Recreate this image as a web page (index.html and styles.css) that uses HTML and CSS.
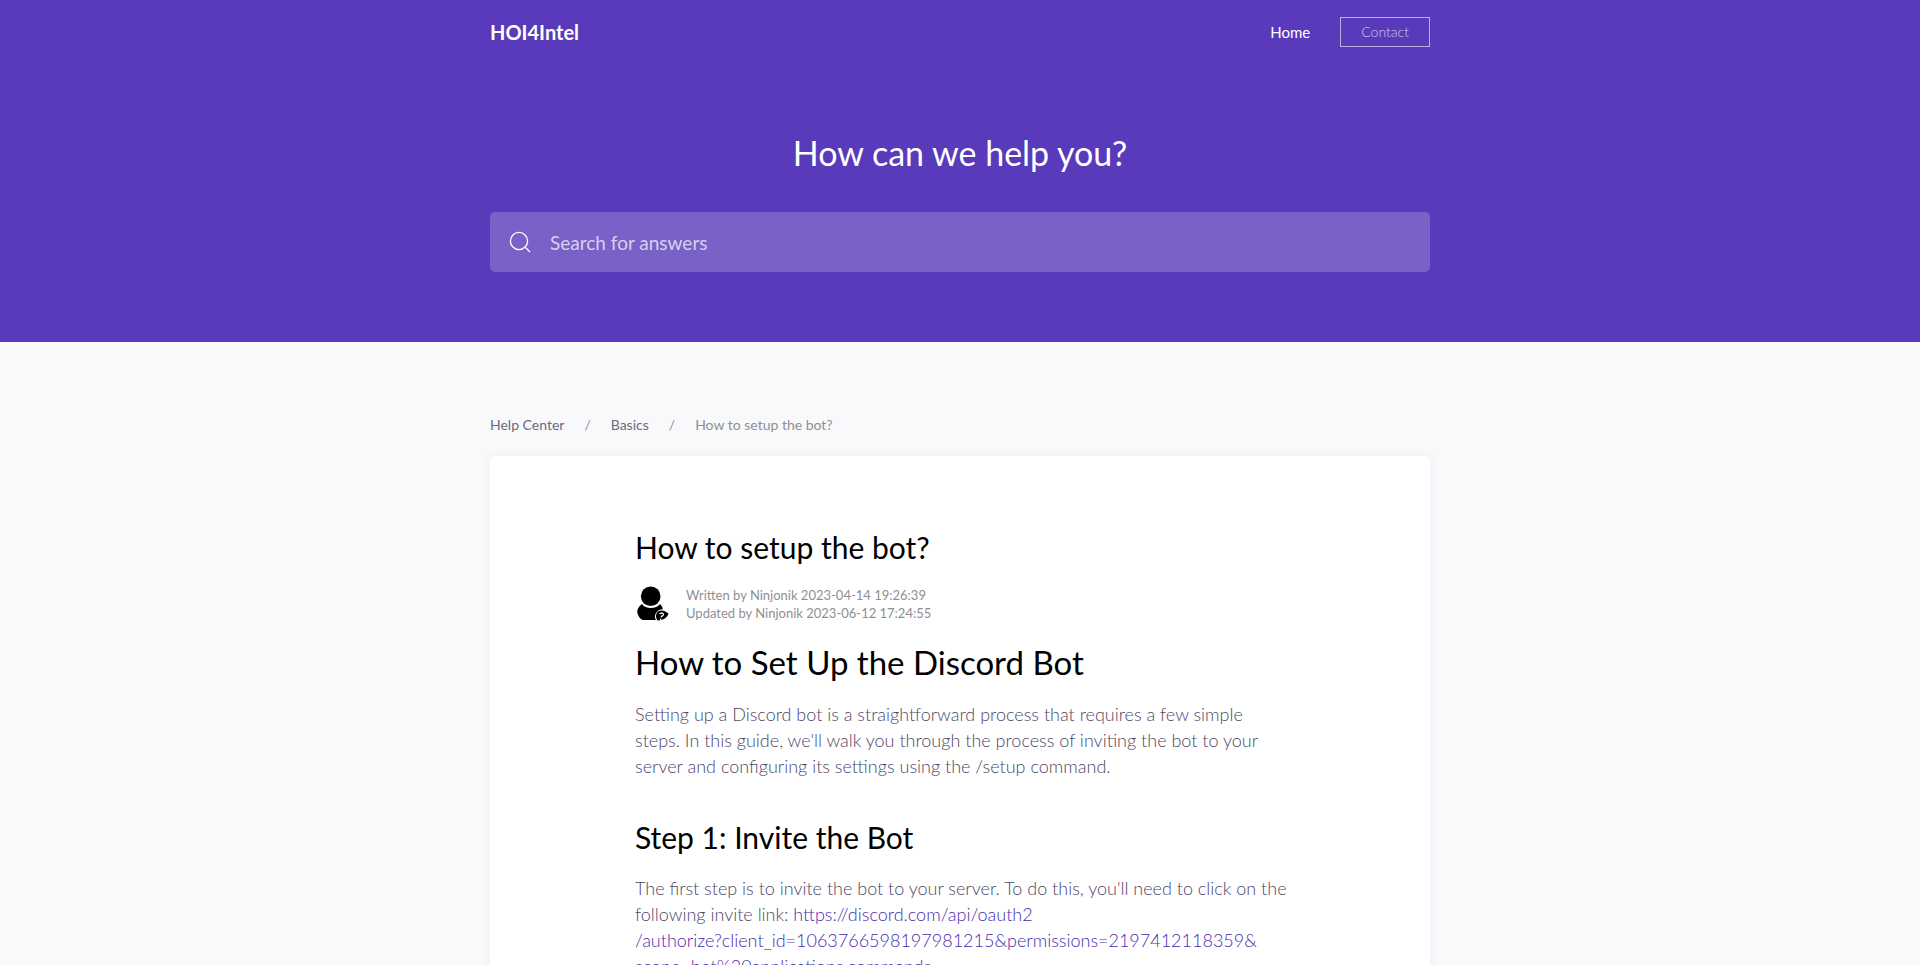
FILE: index.html
```html
<!DOCTYPE html>
<html lang="en">
<head>
<meta charset="utf-8">
<meta name="viewport" content="width=device-width, initial-scale=1">
<title>How to setup the bot? - HOI4Intel</title>
<link rel="stylesheet" href="styles.css">
</head>
<body>
<header class="hero">
  <div class="container">
    <nav class="navbar" aria-label="Main">
      <a class="brand" href="#">HOI4Intel</a>
      <div class="nav-links">
        <a class="nav-link" href="#">Home</a>
        <a class="nav-button" href="#">Contact</a>
      </div>
    </nav>
    <h1 class="hero-title">How can we help you?</h1>
    <form class="search" role="search">
      <label class="search-label" for="search" aria-label="Search">
        <svg class="search-icon" viewBox="0 0 20 20" aria-hidden="true"><circle cx="9" cy="9" r="8.6"/><path d="M15 15l5 5"/></svg>
      </label>
      <input class="search-input" id="search" type="search" placeholder="Search for answers">
    </form>
  </div>
</header>
<main class="container">
  <nav class="breadcrumb" aria-label="Breadcrumb">
    <a class="crumb" href="#">Help Center</a>
    <span>/</span>
    <a class="crumb" href="#">Basics</a>
    <span>/</span>
    <span>How to setup the bot?</span>
  </nav>
  <article class="card">
    <h2 class="article-title">How to setup the bot?</h2>
    <div class="author">
      <svg class="avatar" viewBox="0 0 35 35" aria-hidden="true">
        <circle cx="15.700" cy="10.200" r="9.800"/>
        <path d="M7 18C10 23.300 21.500 23.300 25 18C26.500 19.300 27.500 21.500 27.800 23.200C22 23.500 18 29 21 34H9C6 34 3.500 31.500 2.200 26C2.200 23 4 20 7 18Z"/>
        <path d="M22.500 34.500C19 29.500 22 24.500 26.500 24.500C29.500 24.500 31.500 26.200 33.500 27.500C32.500 31 29.500 34 22.500 34.500Z"/>
        <path class="avatar-mark" d="M24.600 28C25.200 26.700 28.700 26.600 28.500 28.700C28.300 30 26.400 29.700 26.100 31.300M25.600 32.800V34"/>
      </svg>
      <div class="meta">
        <div>Written by Ninjonik 2023-04-14 19:26:39</div>
        <div>Updated by Ninjonik 2023-06-12 17:24:55</div>
      </div>
    </div>
    <h1 class="content-title">How to Set Up the Discord Bot</h1>
    <p class="text">Setting up a Discord bot is a straightforward process that requires a few simple steps. In this guide, we'll walk you through the process of inviting the bot to your server and configuring its settings using the /setup command.</p>
    <h2 class="step-title">Step 1: Invite the Bot</h2>
    <p class="text">The first step is to invite the bot to your server. To do this, you'll need to click on the following invite link: <a class="link" href="#"><span class="url-part">https://discord.com/api/oauth2</span><span class="url-part">/authorize?client_id=1063766598197981215&amp;permissions=2197412118359&amp;</span><span class="url-part">scope=bot%20applications.commands</span></a></p>
  </article>
</main>
</body>
</html>
```
FILE: styles.css
```css
* { box-sizing: border-box; }
body {
  margin: 0;
  background: #f9f9fb;
  color: #4d4768;
  font-family: Lato, "Open Sans", sans-serif;
  font-size: 18px;
  font-weight: 300;
  line-height: 26px;
}
h1, h2, p { margin: 0; }
a { color: inherit; text-decoration: none; }
.container {
  width: 100%;
  max-width: 980px;
  margin: 0 auto;
  padding: 0 20px;
}
.hero { padding: 16px 0 70px; background: #583abb; color: #fff; }
.navbar { display: flex; align-items: center; justify-content: space-between; }
.brand { font-size: 20px; font-weight: 700; line-height: 32px; }
.nav-links { display: flex; align-items: center; gap: 30px; }
.nav-link { font-size: 15px; font-weight: 400; }
.nav-button {
  padding: 0 20px;
  border: 1px solid #bcb0e3;
  color: #d3cbee;
  font-size: 14px;
  line-height: 28px;
}
.hero-title {
  margin: 81px 0 35px;
  font-size: 34px;
  font-weight: 400;
  line-height: 48px;
  text-align: center;
}
.search {
  display: flex;
  align-items: center;
  height: 60px;
  border-radius: 5px;
  background: #7961c8;
}
.search-label { display: flex; padding: 0 20px; }
.search-icon { width: 20px; height: 20px; overflow: visible; fill: none; stroke: #fff; stroke-width: 1.3; }
.search-input {
  flex: 1;
  min-width: 0;
  height: 100%;
  padding: 0;
  border: 0;
  outline: 0;
  background: none;
  color: #fff;
  font: inherit;
  font-size: 19px;
  font-weight: 400;
}
.search-input::placeholder { color: #d7cfee; opacity: 1; }
.breadcrumb {
  display: flex;
  flex-wrap: wrap;
  gap: 0 20px;
  padding: 70px 0 18px;
  color: #8f8f94;
  font-size: 14px;
  font-weight: 400;
}
.crumb { color: #6c6783; }
.card {
  padding: 68px clamp(20px, 8vw, 140px) 68px clamp(20px, 8vw, 145px);
  border-radius: 5px;
  background: #fff;
  box-shadow: 0 0 12px rgba(88, 58, 187, 0.06);
}
.article-title, .content-title, .step-title { color: #000; font-weight: 400; }
.article-title, .step-title { font-size: 30px; line-height: 46px; }
.author { display: flex; align-items: center; gap: 16px; margin-top: 14px; }
.avatar { width: 35px; height: 35px; }
.avatar-mark { fill: none; stroke: #fff; stroke-width: 1.2; }
.meta { padding-top: 2px; color: #8f8f94; font-size: 13px; font-weight: 400; line-height: 18px; }
.content-title { margin: 16px 0 15px; font-size: 33px; line-height: 48px; }
.step-title { margin: 35px 0 15px; }
.link { color: #4a2bb0; }
.url-part { display: inline-block; max-width: 100%; overflow-wrap: anywhere; }
```
